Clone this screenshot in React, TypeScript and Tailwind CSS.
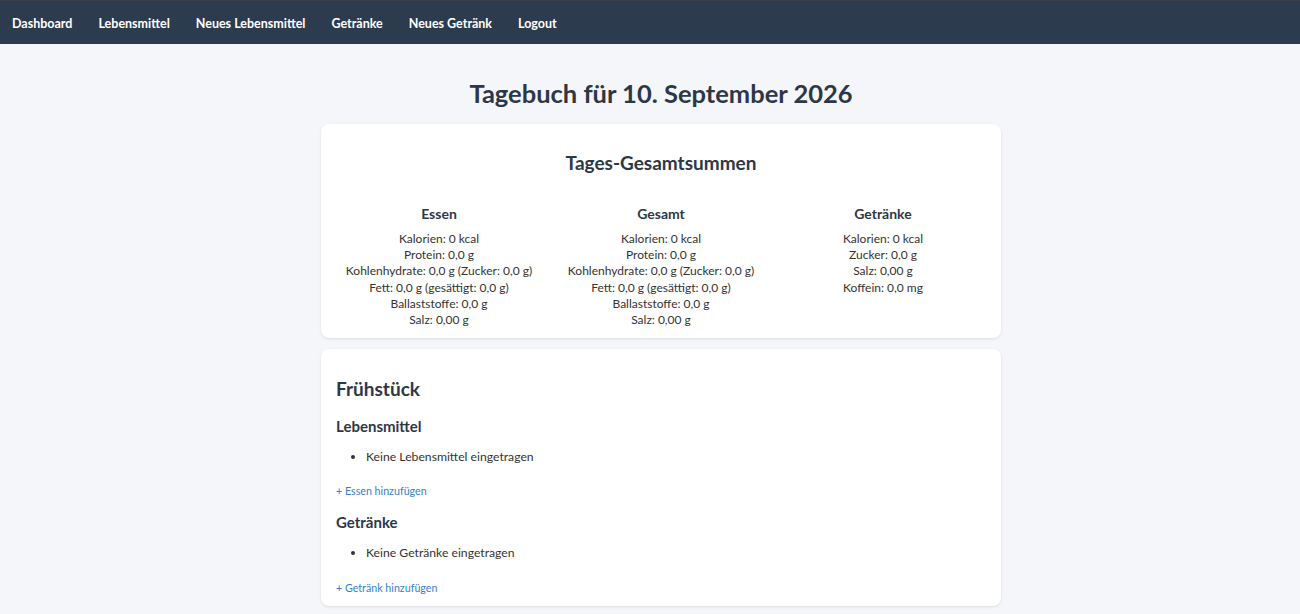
import React from "react";

const font = { fontFamily: 'Lato, "Noto Sans", sans-serif' };

function Column({ title, lines }: { title: string; lines: string[] }) {
  return (
    <div className="flex flex-col items-center text-center">
      <h3 className="text-[14px] leading-[20px] font-bold text-[#2d3748]">{title}</h3>
      <div className="mt-[7px] text-[12px] leading-[16.2px] text-[#333] whitespace-nowrap">
        {lines.map((l) => (
          <div key={l}>{l}</div>
        ))}
      </div>
    </div>
  );
}

export default function App() {
  const essen = [
    "Kalorien: 0 kcal",
    "Protein: 0,0 g",
    "Kohlenhydrate: 0,0 g (Zucker: 0,0 g)",
    "Fett: 0,0 g (gesättigt: 0,0 g)",
    "Ballaststoffe: 0,0 g",
    "Salz: 0,00 g",
  ];
  const getraenke = ["Kalorien: 0 kcal", "Zucker: 0,0 g", "Salz: 0,00 g", "Koffein: 0,0 mg"];
  return (
    <div className="min-h-[614px] bg-[#f4f6fa]" style={font}>
      <nav className="h-[44px] bg-[#2d3b4e] border-t border-[#3a3f46] flex items-center px-3 pt-[3px] gap-[26px]">
        {["Dashboard", "Lebensmittel", "Neues Lebensmittel", "Getränke", "Neues Getränk", "Logout"].map((n) => (
          <a key={n} className="text-white text-[12.5px] font-bold">
            {n}
          </a>
        ))}
      </nav>
      <div className="flex justify-center pl-[22px]">
        <main className="w-[680px] pt-[33px]">
          <h1 className="text-center text-[25.5px] leading-[32px] font-bold text-[#2d3748] mb-[15px]">
            Tagebuch für 10. September 2026
          </h1>
          <section className="bg-white rounded-lg shadow-[0_1px_3px_rgba(0,0,0,0.1)] px-6 pt-[26px] pb-[10px]">
            <h2 className="text-center text-[19px] leading-[26px] font-bold text-[#2d3748]">Tages-Gesamtsummen</h2>
            <div className="grid grid-cols-3 gap-x-[34px] mt-[28px]">
              <Column title="Essen" lines={essen} />
              <Column title="Gesamt" lines={essen} />
              <Column title="Getränke" lines={getraenke} />
            </div>
          </section>
          <section className="mt-[11px] bg-white rounded-lg shadow-[0_1px_3px_rgba(0,0,0,0.1)] px-[15px] pt-[27px] pb-[11px]">
            <h2 className="text-[19px] leading-[26px] font-bold text-[#2d3748]">Frühstück</h2>
            <h3 className="mt-[14px] text-[15px] leading-[20px] font-bold text-[#2d3748]">Lebensmittel</h3>
            <ul className="mt-[12px] list-disc pl-[30px] text-[12.2px] leading-[18px] text-[#333]">
              <li>Keine Lebensmittel eingetragen</li>
            </ul>
            <a className="block mt-[18px] text-[10.7px] leading-[14px] text-[#3182ce]">+ Essen hinzufügen</a>
            <h3 className="mt-[14px] text-[15px] leading-[20px] font-bold text-[#2d3748]">Getränke</h3>
            <ul className="mt-[12px] list-disc pl-[30px] text-[12.2px] leading-[18px] text-[#333]">
              <li>Keine Getränke eingetragen</li>
            </ul>
            <a className="block mt-[19px] text-[10.7px] leading-[14px] text-[#3182ce]">+ Getränk hinzufügen</a>
          </section>
        </main>
      </div>
    </div>
  );
}
